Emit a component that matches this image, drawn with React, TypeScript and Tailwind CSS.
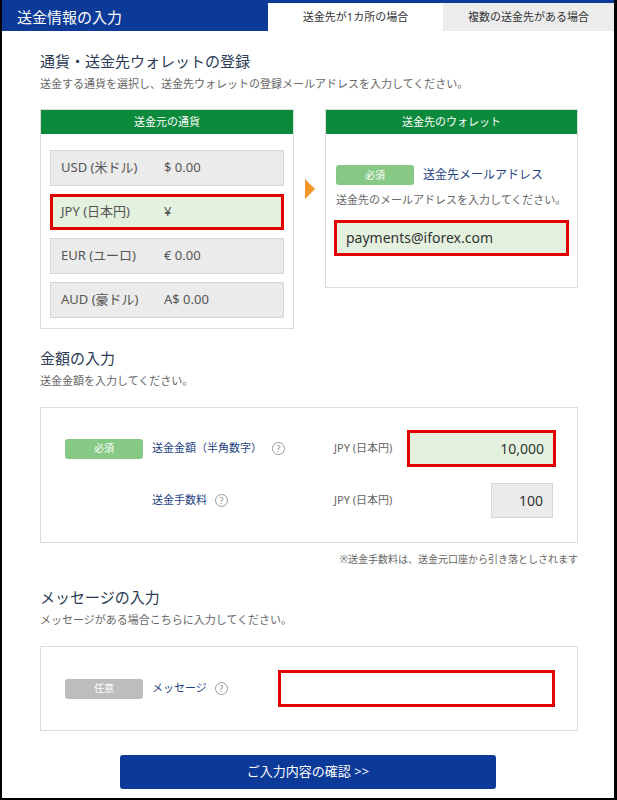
import React from 'react';

const font = { fontFamily: '"Noto Sans", "Noto Sans CJK JP", sans-serif' };

function Help() {
  return (
    <span className="inline-flex h-[13px] w-[13px] items-center justify-center rounded-full border border-[#999] text-[9px] leading-none text-[#888]">
      ?
    </span>
  );
}

function Badge({ label, gray }: { label: string; gray?: boolean }) {
  return (
    <span
      className={`inline-flex h-[20px] w-[78px] shrink-0 items-center justify-center rounded-[3px] text-[10px] text-white ${
        gray ? 'bg-[#bdbdbd]' : 'bg-[#86c985]'
      }`}
    >
      {label}
    </span>
  );
}

function SectionTitle({ title, sub }: { title: string; sub: string }) {
  return (
    <div>
      <h2 className="text-[15px] leading-[20px] text-[#2b3a55]">{title}</h2>
      <p className="mt-[5px] text-[11px] leading-[16px] text-[#666]">{sub}</p>
    </div>
  );
}

const currencies = [
  { code: 'USD (米ドル)', value: '$ 0.00' },
  { code: 'JPY (日本円)', value: '¥', active: true },
  { code: 'EUR (ユーロ)', value: '€ 0.00' },
  { code: 'AUD (豪ドル)', value: 'A$ 0.00' },
];

export default function App() {
  return (
    <div
      style={font}
      className="h-[800px] w-[617px] overflow-hidden border-b-2 border-l-2 border-r-[3px] border-black bg-white"
    >
      {/* header */}
      <div className="flex h-[31px] bg-[#0c3a98] pt-[3px]">
        <div className="flex w-[266px] items-center pl-[15px] text-[15px] text-white">送金情報の入力</div>
        <div className="flex w-[175px] items-center justify-center bg-white text-[11px] text-[#333]">
          送金先が1カ所の場合
        </div>
        <div className="flex flex-1 items-center justify-center bg-[#ececec] text-[11px] text-[#333]">
          複数の送金先がある場合
        </div>
      </div>

      <div className="pl-[38px] pr-[36px] pt-[20px]">
        <SectionTitle
          title="通貨・送金先ウォレットの登録"
          sub="送金する通貨を選択し、送金先ウォレットの登録メールアドレスを入力してください。"
        />

        <div className="mt-[17px] flex items-start">
          {/* source currency */}
          <div className="w-[254px] border border-[#dcdcdc]">
            <div className="flex h-[24px] items-center justify-center bg-[#0c8a3b] text-[11px] text-white">送金元の通貨</div>
            <div className="flex flex-col gap-[8px] px-[9px] pb-[10px] pt-[16px]">
              {currencies.map((c) => (
                <div
                  key={c.code}
                  className={`flex h-[36px] items-center text-[13px] text-[#555] ${
                    c.active
                      ? 'border-[3px] border-[#e00000] bg-[#e3f1de] pl-[8px]'
                      : 'border border-[#d6d6d6] bg-[#ebebeb] pl-[10px]'
                  }`}
                >
                  <span className="w-[103px]">{c.code}</span>
                  <span>{c.value}</span>
                </div>
              ))}
            </div>
          </div>

          <div className="flex w-[31px] justify-center pt-[70px]">
            <span className="h-0 w-0 border-y-[10px] border-l-[10px] border-y-transparent border-l-[#f4962a]" />
          </div>

          {/* destination wallet */}
          <div className="h-[179px] w-[253px] border border-[#dcdcdc]">
            <div className="flex h-[24px] items-center justify-center bg-[#0c8a3b] text-[11px] text-white">
              送金先のウォレット
            </div>
            <div className="px-[8px] pt-[31px]">
              <div className="flex items-center gap-[9px] pl-[2px]">
                <Badge label="必須" />
                <span className="text-[12px] text-[#1e3f7f]">送金先メールアドレス</span>
              </div>
              <p className="mt-[7px] pl-[2px] text-[11px] text-[#666]">送金先のメールアドレスを入力してください。</p>
              <div className="mt-[11px] flex h-[36px] items-center border-[3px] border-[#e00000] bg-[#e3f1de] pl-[9px] text-[14px] text-[#333]">
                payments@iforex.com
              </div>
            </div>
          </div>
        </div>

        {/* amount */}
        <div className="mt-[19px]">
          <SectionTitle title="金額の入力" sub="送金金額を入力してください。" />
        </div>
        <div className="mt-[18px] border border-[#dcdcdc] pb-[24px] pl-[24px] pr-[21px] pt-[22px]">
          <div className="flex items-center">
            <Badge label="必須" />
            <span className="ml-[9px] flex w-[182px] items-center gap-[10px] text-[11px] text-[#1e3f7f]">
              送金金額（半角数字）<Help />
            </span>
            <span className="flex-1 text-[11px] text-[#666]">JPY (日本円)</span>
            <div className="flex h-[37px] w-[149px] items-center justify-end border-[3px] border-[#e00000] bg-[#e3f1de] pr-[9px] text-[14px] text-[#333]">
              10,000
            </div>
          </div>
          <div className="mt-[16px] flex items-center">
            <span className="w-[78px]" />
            <span className="ml-[9px] flex w-[182px] items-center gap-[8px] text-[11px] text-[#1e3f7f]">
              送金手数料<Help />
            </span>
            <span className="flex-1 text-[11px] text-[#666]">JPY (日本円)</span>
            <div className="mr-[3px] flex h-[35px] w-[62px] items-center justify-end border border-[#d6d6d6] bg-[#ebebeb] pr-[9px] text-[14px] text-[#333]">
              100
            </div>
          </div>
        </div>
        <p className="mt-[9px] text-right text-[10px] text-[#666]">※送金手数料は、送金元口座から引き落としされます</p>

        {/* message */}
        <div className="mt-[20px]">
          <SectionTitle title="メッセージの入力" sub="メッセージがある場合こちらに入力してください。" />
        </div>
        <div className="mt-[18px] flex h-[85px] items-center border border-[#dcdcdc] pl-[24px] pr-[22px]">
          <Badge label="任意" gray />
          <span className="ml-[9px] flex w-[126px] items-center gap-[8px] text-[11px] text-[#1e3f7f]">
            メッセージ<Help />
          </span>
          <div className="h-[37px] flex-1 border-[3px] border-[#e00000] bg-white" />
        </div>

        <div className="mt-[24px] flex justify-center pr-[2px]">
          <button className="h-[34px] w-[376px] rounded-[3px] bg-[#0c3a98] text-[13px] text-white">
            ご入力内容の確認 &gt;&gt;
          </button>
        </div>
      </div>
    </div>
  );
}
